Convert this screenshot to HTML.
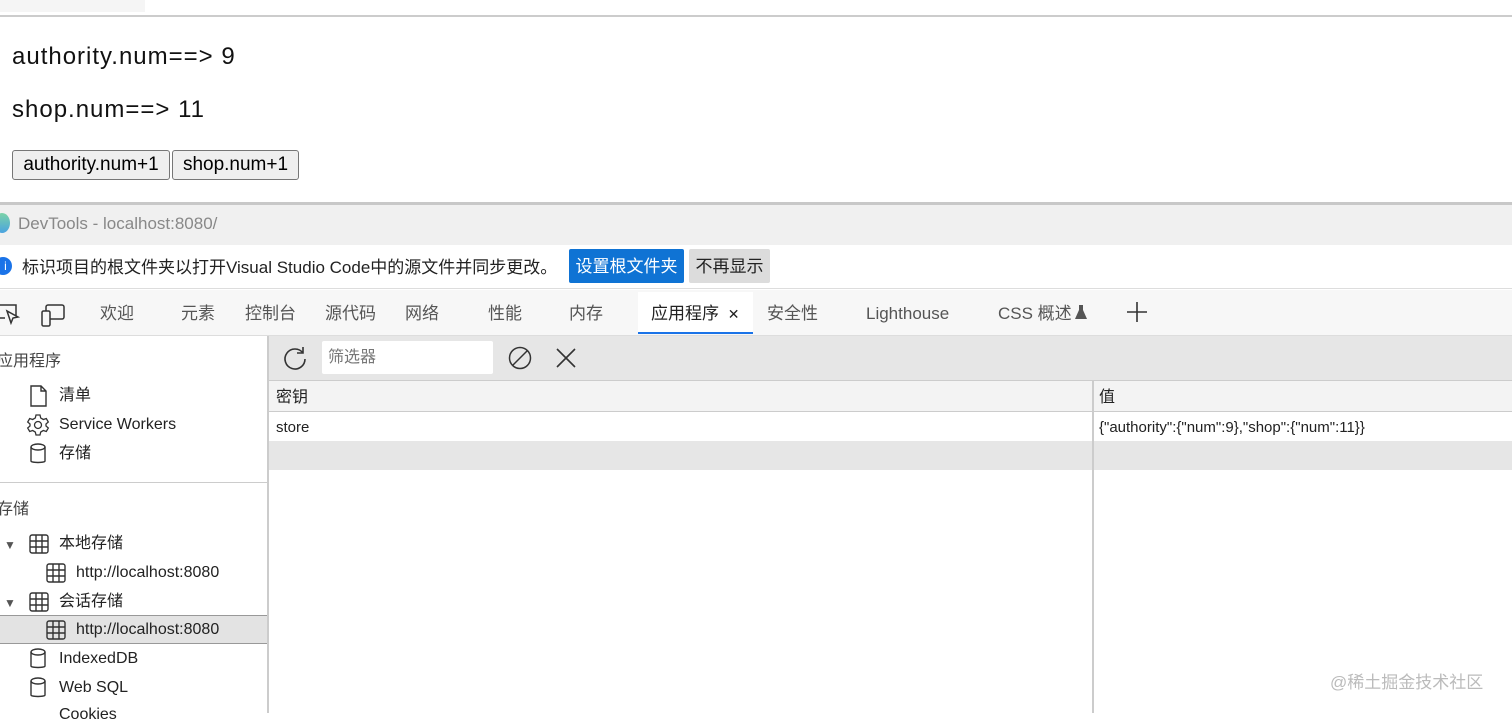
<!DOCTYPE html>
<html><head><meta charset="utf-8"><style>
*{margin:0;padding:0;box-sizing:border-box}
body{width:1512px;height:713px;overflow:hidden;background:#fff;font-family:"Liberation Sans","Noto Sans CJK SC",sans-serif;position:relative;color:#222}
.a{position:absolute;white-space:nowrap;line-height:20px}
.btn{position:absolute;top:150px;height:30px;border:1px solid #767676;border-radius:3px;background:#efefef;font-size:19px;line-height:28px;text-align:center;color:#000}
.tab{position:absolute;top:303px;font-size:17px;color:#555;line-height:22px;white-space:nowrap}
.si{font-size:16px;color:#222}
</style></head><body>
<div class="a" style="left:0;top:0;width:145px;height:12px;background:#f5f5f5"></div>
<div class="a" style="left:0;top:15px;width:1512px;height:2px;background:#ccc"></div>
<div class="a" style="left:12px;top:43px;font-size:24px;line-height:28px;letter-spacing:1px;color:#111">authority.num==&gt; 9</div>
<div class="a" style="left:12px;top:96px;font-size:24px;line-height:28px;letter-spacing:1px;color:#111">shop.num==&gt; 11</div>
<div class="btn" style="left:12px;width:158px">authority.num+1</div>
<div class="btn" style="left:172px;width:127px">shop.num+1</div>
<div class="a" style="left:0;top:202px;width:1512px;height:3px;background:#c8c8c8"></div>
<div class="a" style="left:0;top:205px;width:1512px;height:40px;background:#f0f0f0"></div>
<div class="a" style="left:-6px;top:213px;width:16px;height:20px;border-radius:50%;background:linear-gradient(#7bd3a8,#4aa3e0)"></div>
<div class="a" style="left:18px;top:214px;font-size:17px;color:#888">DevTools - localhost:8080/</div>
<div class="a" style="left:0;top:245px;width:1512px;height:44px;background:#fff;border-bottom:1px solid #ddd"></div>
<div class="a" style="left:-6px;top:257px;width:18px;height:18px;border-radius:50%;background:#1a73e8;color:#fff;font-size:12px;text-align:center;line-height:18px;padding-left:5px">i</div>
<div class="a" style="left:22px;top:257px;font-size:17px;line-height:22px;color:#222">标识项目的根文件夹以打开Visual Studio Code中的源文件并同步更改。</div>
<div class="a" style="left:569px;top:249px;width:115px;height:34px;background:#0f73d4;border-radius:2px;color:#fff;font-size:17px;line-height:36px;text-align:center">设置根文件夹</div>
<div class="a" style="left:689px;top:249px;width:81px;height:34px;background:#dcdcdc;border-radius:2px;color:#222;font-size:17px;line-height:36px;text-align:center">不再显示</div>
<div class="a" style="left:0;top:290px;width:1512px;height:46px;background:#f7f7f7;border-bottom:1px solid #ddd"></div>
<svg class="a" style="left:-2px;top:303px" width="22" height="22" fill="none" stroke="#333" stroke-width="1.5"><path d="M1 2h17v11M7 15H1M9 8l4 12 2-5 5-1z"/></svg>
<svg class="a" style="left:40px;top:303px" width="26" height="24" fill="none" stroke="#333" stroke-width="1.5"><rect x="6" y="2" width="18" height="14" rx="2"/><rect x="2" y="8" width="8" height="15" rx="1.5" fill="#f7f7f7"/></svg>
<div class="tab" style="left:100px">欢迎</div>
<div class="tab" style="left:181px">元素</div>
<div class="tab" style="left:245px">控制台</div>
<div class="tab" style="left:325px">源代码</div>
<div class="tab" style="left:405px">网络</div>
<div class="tab" style="left:488px">性能</div>
<div class="tab" style="left:569px">内存</div>
<div class="a" style="left:638px;top:292px;width:115px;height:42px;background:#fff;border-bottom:2px solid #1a73e8"></div>
<div class="tab" style="left:651px;color:#222">应用程序 <span style="font-size:14px;margin-left:4px">✕</span></div>
<div class="tab" style="left:767px">安全性</div>
<div class="tab" style="left:866px">Lighthouse</div>
<div class="tab" style="left:998px">CSS 概述</div>
<svg class="a" style="left:1074px;top:304px" width="14" height="16"><path d="M4 1h6M5 1v5L1 15h12L9 6V1z" fill="#555"/></svg>
<svg class="a" style="left:1126px;top:301px" width="22" height="22" stroke="#333" stroke-width="1.6"><path d="M11 1v20M1 11h20"/></svg>
<!-- sidebar -->
<div class="a" style="left:267px;top:336px;width:2px;height:377px;background:#ccc"></div>
<div class="a si" style="left:-3px;top:352px;color:#444">应用程序</div>
<svg class="a" style="left:29px;top:385px" width="20" height="22" fill="none" stroke="#333" stroke-width="1.4"><path d="M2 1h10l5 5v15H2zM12 1v5h5"/></svg>
<div class="a si" style="left:59px;top:386px">清单</div>
<svg class="a" style="left:26px;top:413px" width="24" height="24" fill="none" stroke="#333" stroke-width="1.3"><circle cx="12" cy="12" r="3.5"/><path d="M10 2h4l.7 3 2.6 1.5 3-1 2 3.5-2.3 2v2l2.3 2-2 3.5-3-1-2.6 1.5-.7 3h-4l-.7-3-2.6-1.5-3 1-2-3.5 2.3-2v-2l-2.3-2 2-3.5 3 1L9.3 5z"/></svg>
<div class="a si" style="left:59px;top:415px">Service Workers</div>
<svg class="a" style="left:29px;top:443px" width="20" height="22" fill="none" stroke="#333" stroke-width="1.4"><ellipse cx="9" cy="4" rx="7" ry="3"/><path d="M2 4v14c0 2 14 2 14 0V4"/></svg>
<div class="a si" style="left:59px;top:444px">存储</div>
<div class="a" style="left:0;top:482px;width:267px;height:1px;background:#ccc"></div>
<div class="a si" style="left:-3px;top:500px;color:#444">存储</div>
<div class="a" style="left:4px;top:535px;font-size:12px;color:#555">▼</div>
<svg class="a" style="left:29px;top:534px" width="20" height="20" fill="none" stroke="#333" stroke-width="1.4"><rect x="1" y="1" width="18" height="18" rx="2"/><path d="M7 1v18M13 1v18M1 7h18M1 13h18"/></svg>
<div class="a si" style="left:59px;top:534px">本地存储</div>
<svg class="a" style="left:46px;top:563px" width="20" height="20" fill="none" stroke="#333" stroke-width="1.4"><rect x="1" y="1" width="18" height="18" rx="2"/><path d="M7 1v18M13 1v18M1 7h18M1 13h18"/></svg>
<div class="a si" style="left:76px;top:563px">http://localhost:8080</div>
<div class="a" style="left:4px;top:593px;font-size:12px;color:#555">▼</div>
<svg class="a" style="left:29px;top:592px" width="20" height="20" fill="none" stroke="#333" stroke-width="1.4"><rect x="1" y="1" width="18" height="18" rx="2"/><path d="M7 1v18M13 1v18M1 7h18M1 13h18"/></svg>
<div class="a si" style="left:59px;top:592px">会话存储</div>
<div class="a" style="left:0;top:615px;width:267px;height:29px;background:#e3e3e3;border-top:1px solid #999;border-bottom:1px solid #999"></div>
<svg class="a" style="left:46px;top:620px" width="20" height="20" fill="none" stroke="#333" stroke-width="1.4"><rect x="1" y="1" width="18" height="18" rx="2"/><path d="M7 1v18M13 1v18M1 7h18M1 13h18"/></svg>
<div class="a si" style="left:76px;top:620px">http://localhost:8080</div>
<svg class="a" style="left:29px;top:648px" width="20" height="22" fill="none" stroke="#333" stroke-width="1.4"><ellipse cx="9" cy="4" rx="7" ry="3"/><path d="M2 4v14c0 2 14 2 14 0V4"/></svg>
<div class="a si" style="left:59px;top:649px">IndexedDB</div>
<svg class="a" style="left:29px;top:677px" width="20" height="22" fill="none" stroke="#333" stroke-width="1.4"><ellipse cx="9" cy="4" rx="7" ry="3"/><path d="M2 4v14c0 2 14 2 14 0V4"/></svg>
<div class="a si" style="left:59px;top:678px">Web SQL</div>
<div class="a si" style="left:59px;top:705px">Cookies</div>
<!-- main -->
<div class="a" style="left:269px;top:336px;width:1243px;height:45px;background:#e6e6e6;border-bottom:1px solid #ccc"></div>
<svg class="a" style="left:282px;top:345px" width="26" height="26" fill="none" stroke="#333" stroke-width="1.6"><path d="M21 8A10 10 0 1 0 23 14M21 2v6h-6"/></svg>
<div class="a" style="left:322px;top:341px;width:171px;height:33px;background:#fff;border-radius:2px"></div>
<div class="a" style="left:328px;top:348px;font-size:16px;color:#777">筛选器</div>
<svg class="a" style="left:507px;top:345px" width="26" height="26" fill="none" stroke="#333" stroke-width="1.5"><circle cx="13" cy="13" r="10.5"/><path d="M5.5 20.5L20.5 5.5"/></svg>
<svg class="a" style="left:555px;top:347px" width="22" height="22" stroke="#333" stroke-width="1.6"><path d="M2 2l18 18M20 2L2 20"/></svg>
<div class="a" style="left:269px;top:381px;width:1243px;height:31px;background:#f3f3f3;border-bottom:1px solid #ccc"></div>
<div class="a si" style="left:276px;top:388px">密钥</div>
<div class="a si" style="left:1099px;top:388px">值</div>
<div class="a si" style="left:276px;top:418px;font-size:15px">store</div>
<div class="a si" style="left:1099px;top:418px;font-size:15px">{"authority":{"num":9},"shop":{"num":11}}</div>
<div class="a" style="left:269px;top:441px;width:1243px;height:29px;background:#e6e6e6"></div>
<div class="a" style="left:1092px;top:381px;width:2px;height:332px;background:#ccc"></div>
<div class="a" style="left:1330px;top:673px;font-size:17px;color:#bbb">@稀土掘金技术社区</div>
</body></html>
